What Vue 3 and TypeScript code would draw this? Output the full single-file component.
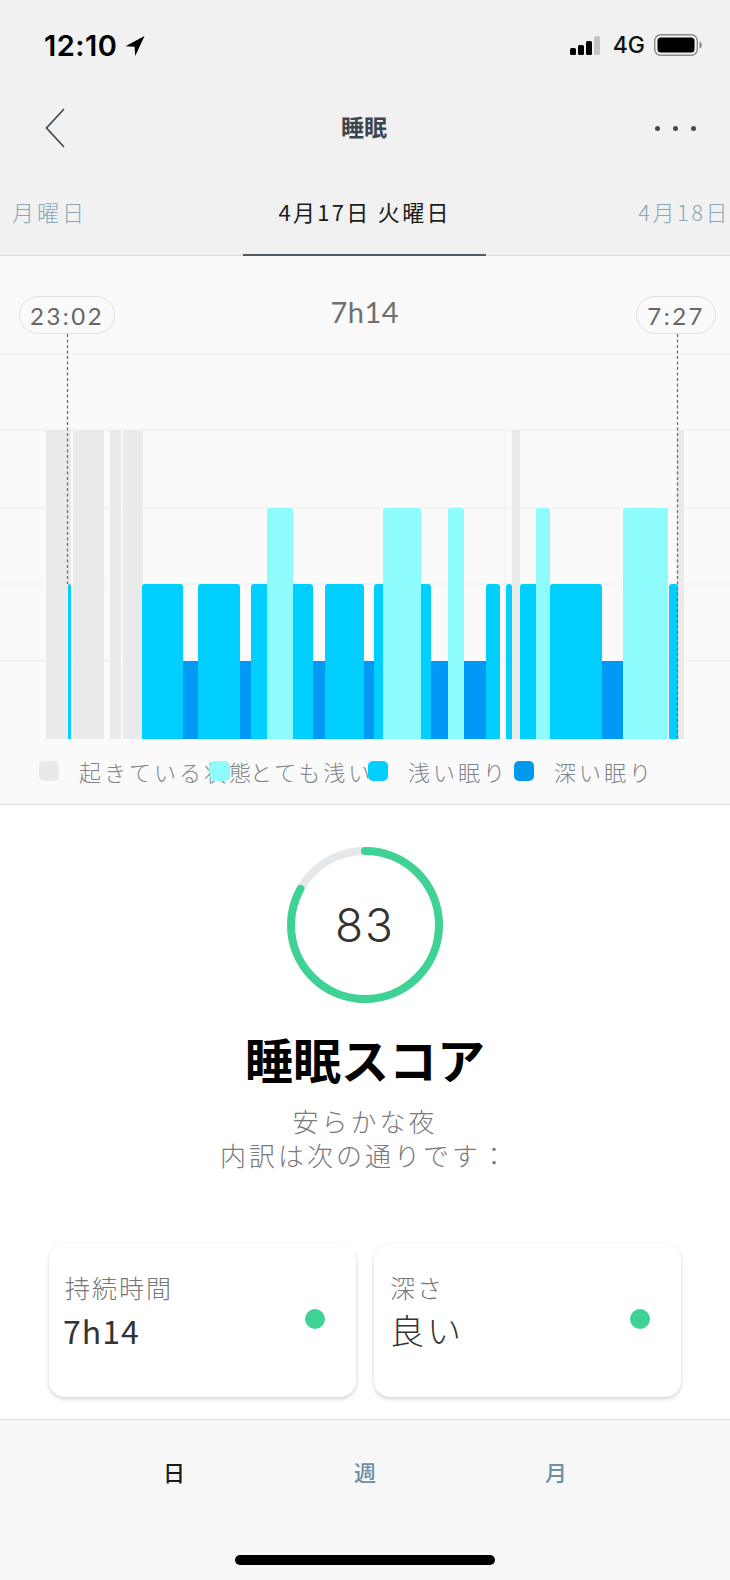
<script setup lang="ts">
type Bar = [number, number]
const grey: Bar[] = [[46, 71], [73, 104], [110, 121], [123, 143], [512, 520], [677, 684]]
const deep: Bar[] = [[183, 198], [240, 251], [312, 325], [364, 375], [431, 448], [463, 486], [601, 623]]
const light: Bar[] = [[68, 71], [142, 183], [198, 240], [251, 313], [325, 364], [374, 431], [486, 500], [506, 512], [520, 550], [550, 602], [669, 678]]
const pale: Bar[] = [[267, 293], [383, 421], [448, 464], [536, 550], [623, 668]]
const gridLines = [354, 430, 508, 584, 661]
const legend = [
  { label: '起きている状態', color: '#e8e9ea', width: 171 },
  { label: 'とても浅い', color: '#8efcfc', width: 158 },
  { label: '浅い眠り', color: '#00cfff', width: 146 },
  { label: '深い眠り', color: '#0099f0', width: 170 },
]
const radius = 74
const circumference = 2 * Math.PI * radius
const scoreDash = `${circumference * 0.83} ${circumference}`
</script>

<template>
  <div class="phone">
    <header class="top">
      <div class="status">
        <div class="time">
          <span>12:10</span>
          <svg width="20" height="22" viewBox="0 0 20 22"><path d="M19.5 1 0.5 11.2 9.6 11.8 10.2 21z" fill="#000" /></svg>
        </div>
        <div class="indicators">
          <div class="signal"><i class="b1"></i><i class="b2"></i><i class="b3"></i><i class="b4"></i></div>
          <span class="net">4G</span>
          <svg width="48" height="22" viewBox="0 0 48 22">
            <rect x="0.7" y="0.7" width="42.6" height="20.6" rx="6" fill="none" stroke="#8b8b8b" stroke-width="1.4" />
            <rect x="3.5" y="3.5" width="37" height="15" rx="3.5" fill="#000" />
            <path d="M45.5 7.5c1.5.4 2.3 1.8 2.3 3.5s-.8 3.100-2.300 3.500z" fill="#8b8b8b" />
          </svg>
        </div>
      </div>
      <div class="nav">
        <svg class="back" width="21" height="40" viewBox="0 0 21 40"><path d="M19 1 1.500 20 19 39" fill="none" stroke="#3f4a52" stroke-width="1.700" /></svg>
        <h1>睡眠</h1>
        <div class="more"><i></i><i></i><i></i></div>
      </div>
      <div class="tabs">
        <span class="tab side left">月曜日</span>
        <span class="tab current">4月17日 火曜日</span>
        <span class="tab side right">4月18日</span>
      </div>
    </header>

    <section class="chart">
      <div class="chart-head">
        <span class="pill">23:02</span>
        <span class="total">7h14</span>
        <span class="pill">7:27</span>
      </div>
      <svg class="plot" width="730" height="411" viewBox="0 334 730 411">
        <defs><clipPath id="plotClip"><rect x="0" y="334" width="730" height="405" /></clipPath></defs>
        <line v-for="y in gridLines" :key="y" x1="0" x2="730" :y1="y" :y2="y" stroke="#f0f0f0" stroke-width="1.500" />
        <line x1="504.500" x2="504.500" y1="430" y2="739" stroke="#f0f0f0" />
        <g clip-path="url(#plotClip)">
          <rect v-for="b in grey" :key="'g' + b[0]" :x="b[0]" y="430" :width="b[1] - b[0]" height="309" fill="#eaeaea" />
          <rect v-for="b in deep" :key="'d' + b[0]" :x="b[0]" y="661" :width="b[1] - b[0]" height="78" fill="#0099f5" />
          <rect v-for="b in light" :key="'l' + b[0]" :x="b[0]" y="584" :width="b[1] - b[0]" height="160" rx="3" fill="#00cfff" />
          <rect v-for="b in pale" :key="'p' + b[0]" :x="b[0]" y="508" :width="b[1] - b[0]" height="236" rx="2" fill="#8efcfc" />
        </g>
        <line x1="67.500" x2="67.500" y1="334" y2="584" stroke="#6f6f6f" stroke-width="1.300" stroke-dasharray="3 2.500" />
        <line x1="677.500" x2="677.500" y1="334" y2="739" stroke="#6f6f6f" stroke-width="1.300" stroke-dasharray="3 2.500" />
      </svg>
      <div class="legend">
        <div v-for="item in legend" :key="item.label" class="legend-item" :style="{ width: item.width + 'px' }">
          <i :style="{ background: item.color }"></i>
          <span>{{ item.label }}</span>
        </div>
      </div>
    </section>

    <main class="score">
      <div class="ring">
        <svg width="160" height="160" viewBox="0 0 160 160">
          <circle cx="80" cy="80" :r="radius" fill="none" stroke="#e4e8ea" stroke-width="8" />
          <circle cx="80" cy="80" :r="radius" fill="none" stroke="#3ed394" stroke-width="8" stroke-linecap="round" :stroke-dasharray="scoreDash" transform="rotate(-90 80 80)" />
        </svg>
        <span class="score-value">83</span>
      </div>
      <h2>睡眠スコア</h2>
      <p>安らかな夜<br />内訳は次の通りです：</p>
      <div class="cards">
        <div class="card">
          <div>
            <div class="card-label">持続時間</div>
            <div class="card-value">7h14</div>
          </div>
          <i class="dot"></i>
        </div>
        <div class="card">
          <div>
            <div class="card-label">深さ</div>
            <div class="card-value jp">良い</div>
          </div>
          <i class="dot"></i>
        </div>
      </div>
    </main>

    <footer class="bottom">
      <nav class="periods">
        <span class="active">日</span>
        <span>週</span>
        <span>月</span>
      </nav>
      <div class="home"></div>
    </footer>
  </div>
</template>

<style scoped>
.phone {
  width: 730px;
  height: 1580px;
  display: flex;
  flex-direction: column;
  overflow: hidden;
  background: #fff;
  font-family: "Noto Sans CJK JP", "Noto Sans", sans-serif;
}
.top {
  height: 256px;
  flex: none;
  background: #f1f1f1;
  display: flex;
  flex-direction: column;
  border-bottom: 1px solid #dcdcdc;
  box-sizing: border-box;
}
.status {
  height: 90px;
  flex: none;
  display: flex;
  justify-content: space-between;
  align-items: center;
  padding: 0 28px 0 44px;
}
.time {
  display: flex;
  align-items: center;
  gap: 8px;
  font: 600 29px "Inter", sans-serif;
  letter-spacing: 0.5px;
  color: #000;
}
.time svg {
  margin-top: 2px;
}
.indicators {
  display: flex;
  align-items: center;
}
.signal {
  display: flex;
  align-items: flex-end;
  gap: 2.500px;
  height: 19px;
}
.signal i {
  width: 5.500px;
  background: #000;
  border-radius: 1.500px;
}
.signal .b1 { height: 7px; }
.signal .b2 { height: 10px; }
.signal .b3 { height: 14px; }
.signal .b4 { height: 19px; background: #c4c4c4; }
.net {
  margin: 0 9px 0 13px;
  font: 500 23px "Inter", sans-serif;
  color: #111;
}
.nav {
  height: 76px;
  flex: none;
  display: flex;
  align-items: center;
  justify-content: space-between;
  padding: 0 34px 0 45px;
}
.nav h1 {
  margin: 0 0 4px 7px;
  font-size: 23px;
  font-weight: 700;
  color: #3a4750;
}
.more {
  display: flex;
  gap: 13px;
}
.more i {
  width: 5px;
  height: 5px;
  border-radius: 50%;
  background: #3f4a52;
}
.tabs {
  flex: 1;
  position: relative;
  display: flex;
  justify-content: space-between;
  align-items: center;
  padding-top: 1px;
}
.tab {
  font-size: 22px;
  letter-spacing: 3px;
  white-space: nowrap;
  font-weight: 300;
}
.side {
  color: #8ba7b7;
  flex: none;
}
.left {
  margin-left: 12px;
}
.right {
  letter-spacing: 2.500px;
}
.current {
  color: #1c1c1c;
  font-weight: 400;
  letter-spacing: 2.300px;
  margin-left: 4px;
}
.tabs::after {
  content: "";
  position: absolute;
  left: 243px;
  width: 243px;
  bottom: -1px;
  height: 2px;
  background: #505a60;
}
.chart {
  height: 549px;
  flex: none;
  box-sizing: border-box;
  background: #fafafa;
  border-bottom: 1px solid #dcdcdc;
  display: flex;
  flex-direction: column;
}
.chart-head {
  display: flex;
  justify-content: space-between;
  align-items: center;
  padding: 40px 14px 0 19px;
  height: 38px;
  box-sizing: content-box;
  flex: none;
}
.pill {
  box-sizing: border-box;
  height: 38px;
  padding: 0 10px;
  display: flex;
  align-items: center;
  border: 1.500px solid #e0e0e0;
  border-radius: 19px;
  font: 400 24px "Lato", sans-serif;
  letter-spacing: 2.500px;
  color: #666;
}
.total {
  font: 400 29px "Lato", sans-serif;
  letter-spacing: 0.500px;
  color: #707070;
  margin: 0 22px 8px 0;
}
.plot {
  display: block;
  flex: none;
}
.legend {
  display: flex;
  padding-left: 39px;
  margin-top: 10px;
}
.legend-item {
  flex: none;
  display: flex;
  align-items: center;
  gap: 20px;
  white-space: nowrap;
  font-size: 22px;
  font-weight: 300;
  letter-spacing: 3px;
  color: #808488;
  height: 32px;
}
.legend-item i {
  flex: none;
  width: 20px;
  height: 20px;
  border-radius: 5px;
}
.score {
  flex: 1;
  background: #fff;
  display: flex;
  flex-direction: column;
  align-items: center;
}
.ring {
  position: relative;
  width: 160px;
  height: 160px;
  margin-top: 40px;
}
.ring svg {
  display: block;
}
.score-value {
  position: absolute;
  inset: 0;
  display: flex;
  align-items: center;
  justify-content: center;
  font: 300 46px "Inter", sans-serif;
  letter-spacing: 2px;
  color: #333;
}
.score h2 {
  margin: 20px 0 0;
  font-size: 48px;
  line-height: 66px;
  font-weight: 700;
  color: #000;
}
.score p {
  margin: 13px 0 0;
  text-align: center;
  font-size: 26px;
  line-height: 34px;
  font-weight: 300;
  letter-spacing: 3px;
  color: #7a7a7a;
}
.cards {
  display: flex;
  gap: 18px;
  margin-top: 72px;
}
.card {
  width: 307px;
  height: 153px;
  box-sizing: border-box;
  border-radius: 16px;
  background: #fff;
  box-shadow: 0 2px 4px rgba(0, 0, 0, 0.18);
  display: flex;
  align-items: flex-start;
  justify-content: space-between;
  padding: 25px 31px 0 16px;
}
.card-label {
  font-size: 25px;
  line-height: 36px;
  font-weight: 300;
  letter-spacing: 2px;
  color: #777;
}
.card-value {
  font-size: 32px;
  line-height: 50px;
  font-weight: 400;
  letter-spacing: 1px;
  color: #333;
  margin-left: -2px;
}
.card-value.jp {
  font-size: 34px;
  font-weight: 300;
  letter-spacing: 3px;
  margin-left: 0;
}
.dot {
  width: 20px;
  height: 20px;
  margin-top: 40px;
  border-radius: 50%;
  background: #3ed394;
}
.bottom {
  height: 161px;
  flex: none;
  box-sizing: border-box;
  background: #f7f7f7;
  border-top: 1.500px solid #dedede;
  display: flex;
  flex-direction: column;
  align-items: center;
}
.periods {
  width: 404px;
  display: flex;
  justify-content: space-between;
  margin-top: 35px;
  font-size: 22px;
  line-height: 32px;
  font-weight: 500;
  color: #6d8fa3;
}
.periods .active {
  color: #1c1c1c;
}
.home {
  width: 260px;
  height: 10px;
  border-radius: 5px;
  background: #000;
  margin-top: 68px;
}
</style>

<style>
body { margin: 0; background: #fff; }
</style>
